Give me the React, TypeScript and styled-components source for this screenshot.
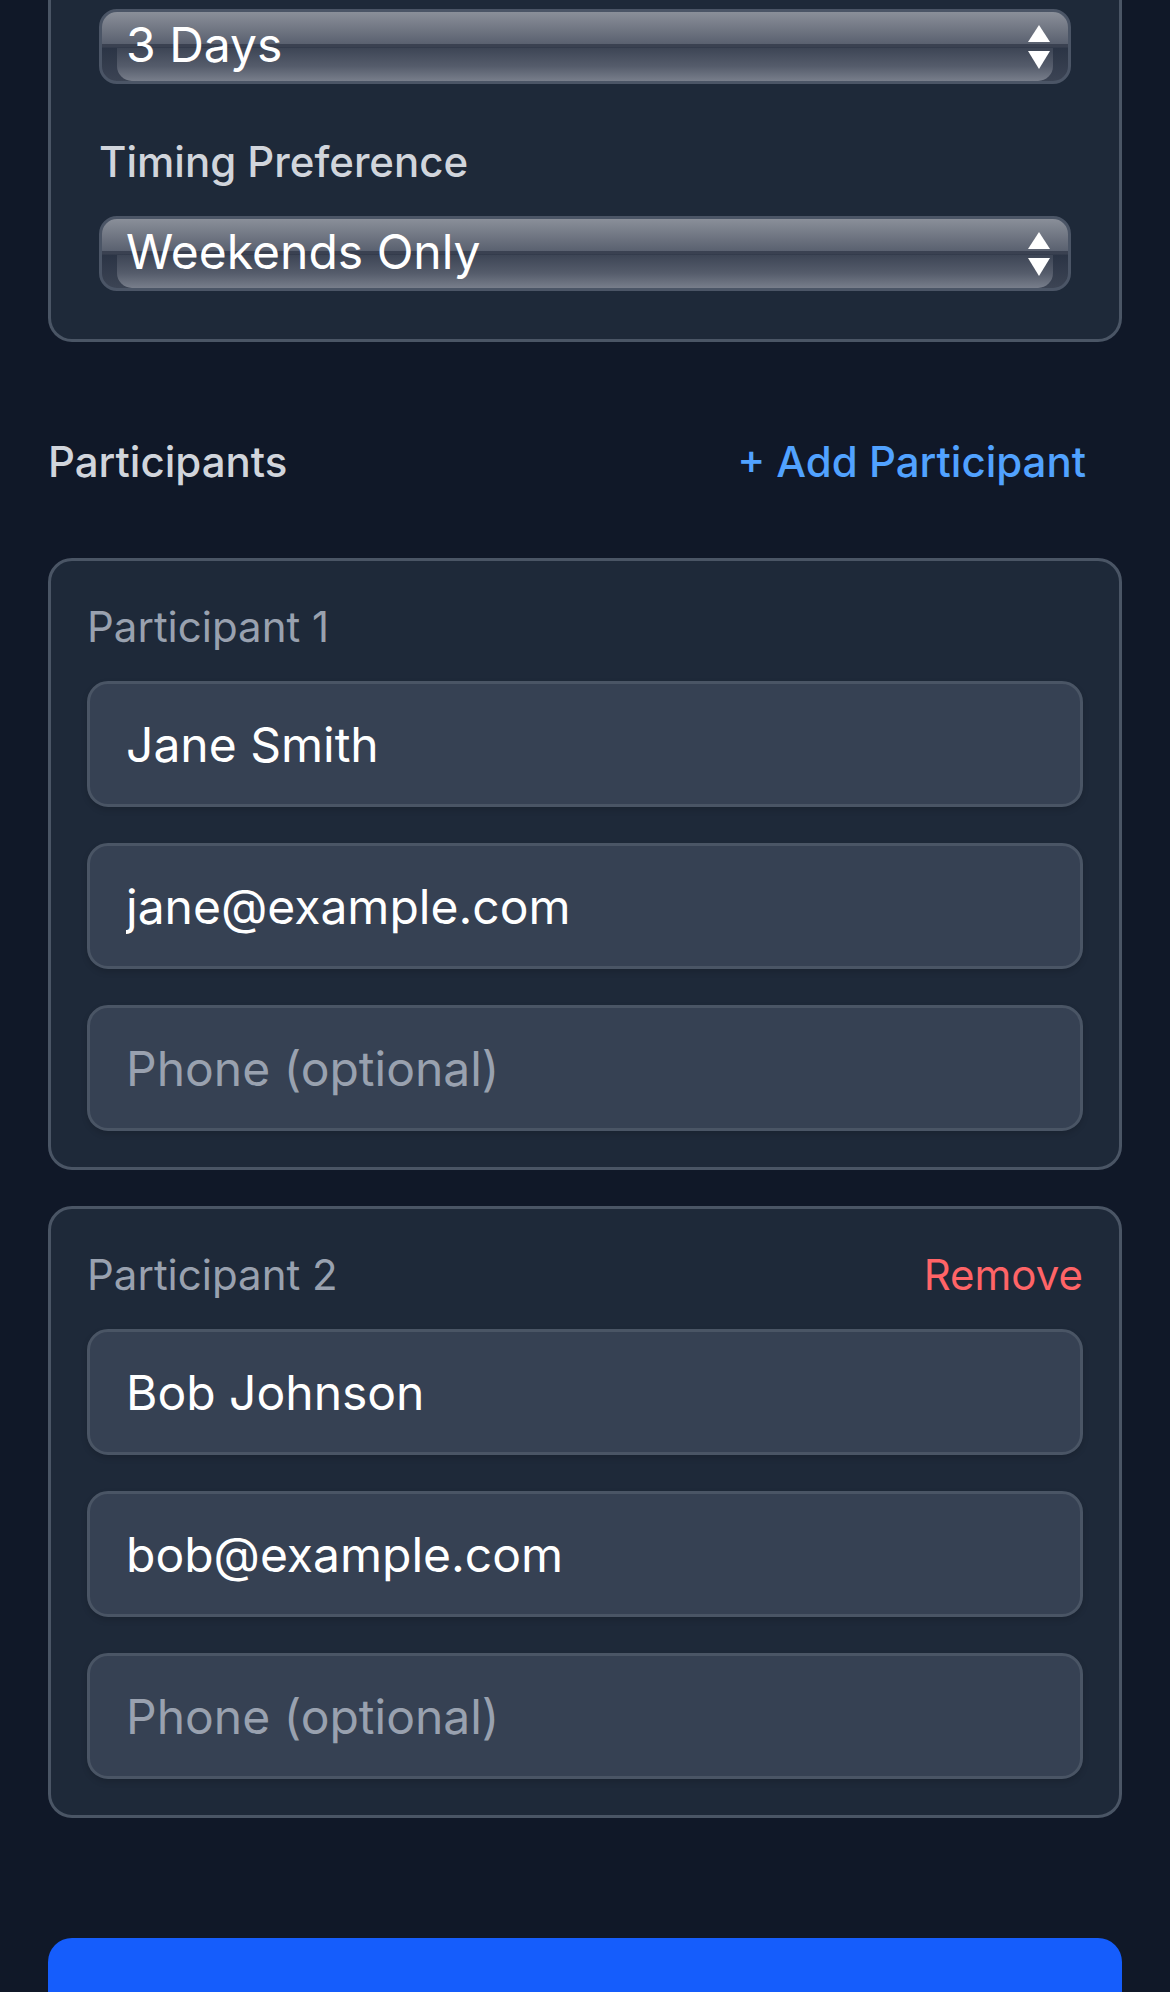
import React from "react";
import styled, { createGlobalStyle } from "styled-components";

const GlobalStyle = createGlobalStyle`
  html, body {
    margin: 0;
    padding: 0;
    background: #101828;
  }
  body {
    font-family: Inter, "Noto Sans", "Liberation Sans", sans-serif;
    -webkit-font-smoothing: antialiased;
  }
  *, *::before, *::after {
    box-sizing: border-box;
  }
`;

const Page = styled.main`
  display: flex;
  flex-direction: column;
  padding: 0 48px;
`;

const PreferencesCard = styled.section`
  display: flex;
  flex-direction: column;
  gap: 48px;
  background: #1e2939;
  border: 3px solid #4a5565;
  border-top: none;
  border-radius: 0 0 24px 24px;
  padding: 9px 48px 48px;
`;

const Field = styled.div`
  display: flex;
  flex-direction: column;
`;

const FieldLabel = styled.label`
  font-size: 42px;
  line-height: 60px;
  font-weight: 500;
  color: #d1d5dc;
  margin-bottom: 24px;
`;

const SelectShell = styled.div`
  position: relative;
  height: 75px;
  border: 3px solid #4b5566;
  border-radius: 18px;
  overflow: hidden;
  background: linear-gradient(
    to bottom,
    #8a8f99 0%,
    #6b717e 30%,
    #5a6170 46%,
    #3a4151 47%,
    #3a4151 51%,
    #2b3445 52%,
    #3c4454 100%
  );

  &::before {
    content: "";
    position: absolute;
    left: 15px;
    right: 15px;
    top: 52%;
    bottom: 0;
    border-radius: 0 0 15px 15px;
    background: linear-gradient(to bottom, #3d4555 0%, #555c6b 55%, #787e8b 100%);
  }
`;

const NativeSelect = styled.select`
  position: relative;
  z-index: 1;
  appearance: none;
  -webkit-appearance: none;
  width: 100%;
  height: 100%;
  margin: 0;
  border: none;
  outline: none;
  background: transparent;
  color: #ffffff;
  font-family: Inter, "Noto Sans", sans-serif;
  font-size: 48px;
  line-height: 58px;
  font-weight: 400;
  padding: 0 80px 3px 24px;
  cursor: pointer;
`;

const SelectArrows = styled.svg`
  position: absolute;
  z-index: 2;
  right: 18px;
  top: 13px;
  width: 22px;
  height: 44px;
  pointer-events: none;
`;

const HeaderRow = styled.div`
  display: flex;
  align-items: center;
  justify-content: space-between;
  margin: 90px 0 66px;
`;

const SectionTitle = styled.h3`
  margin: 0;
  font-size: 42px;
  line-height: 60px;
  font-weight: 500;
  color: #d1d5dc;
`;

const AddButton = styled.button`
  background: none;
  border: none;
  padding: 0 36px;
  font-family: inherit;
  font-size: 42px;
  line-height: 60px;
  font-weight: 500;
  color: #51a2ff;
  cursor: pointer;
`;

const ParticipantList = styled.div`
  display: flex;
  flex-direction: column;
  gap: 36px;
`;

const ParticipantCard = styled.div`
  background: #1e2939;
  border: 3px solid #4a5565;
  border-radius: 24px;
  padding: 36px;
`;

const CardHeader = styled.div`
  display: flex;
  align-items: center;
  justify-content: space-between;
  height: 60px;
  margin-bottom: 24px;
`;

const ParticipantLabel = styled.span`
  font-size: 42px;
  line-height: 60px;
  font-weight: 400;
  color: #99a1af;
`;

const RemoveButton = styled.button`
  background: none;
  border: none;
  padding: 0;
  font-family: inherit;
  font-size: 42px;
  line-height: 60px;
  font-weight: 400;
  color: #ff6467;
  cursor: pointer;
`;

const InputStack = styled.div`
  display: flex;
  flex-direction: column;
  gap: 36px;
`;

const TextInput = styled.input`
  width: 100%;
  height: 126px;
  margin: 0;
  padding: 0 36px;
  background: #364153;
  border: 3px solid #4a5565;
  border-radius: 21px;
  box-shadow: 0 3px 6px rgba(0, 0, 0, 0.14);
  color: #ffffff;
  font-family: Inter, "Noto Sans", sans-serif;
  font-size: 48px;
  font-weight: 400;
  outline: none;

  &::placeholder {
    color: #99a1af;
    opacity: 1;
  }
`;

const SubmitButton = styled.button`
  width: 100%;
  height: 156px;
  margin-top: 120px;
  border: none;
  border-radius: 24px;
  background: #155dfc;
  cursor: pointer;
`;

const Arrows = () => (
  <SelectArrows viewBox="0 0 22 44" aria-hidden="true">
    <polygon points="11,0 22,17 0,17" fill="#ffffff" />
    <polygon points="0,26 22,26 11,44" fill="#ffffff" />
  </SelectArrows>
);

type Participant = {
  id: number;
  name: string;
  email: string;
  phone: string;
};

const participants: Participant[] = [
  { id: 1, name: "Jane Smith", email: "jane@example.com", phone: "" },
  { id: 2, name: "Bob Johnson", email: "bob@example.com", phone: "" },
];

export default function App() {
  return (
    <>
      <GlobalStyle />
      <Page>
        <PreferencesCard>
          <Field>
            <SelectShell>
              <NativeSelect defaultValue="3" aria-label="Duration">
                <option value="1">1 Day</option>
                <option value="2">2 Days</option>
                <option value="3">3 Days</option>
                <option value="5">5 Days</option>
                <option value="7">1 Week</option>
              </NativeSelect>
              <Arrows />
            </SelectShell>
          </Field>
          <Field>
            <FieldLabel htmlFor="timing">Timing Preference</FieldLabel>
            <SelectShell>
              <NativeSelect id="timing" defaultValue="weekends">
                <option value="weekends">Weekends Only</option>
                <option value="weekdays">Weekdays Only</option>
                <option value="any">Any Time</option>
              </NativeSelect>
              <Arrows />
            </SelectShell>
          </Field>
        </PreferencesCard>

        <HeaderRow>
          <SectionTitle>Participants</SectionTitle>
          <AddButton type="button">+ Add Participant</AddButton>
        </HeaderRow>

        <ParticipantList>
          {participants.map((p, i) => (
            <ParticipantCard key={p.id}>
              <CardHeader>
                <ParticipantLabel>Participant {i + 1}</ParticipantLabel>
                {i > 0 && <RemoveButton type="button">Remove</RemoveButton>}
              </CardHeader>
              <InputStack>
                <TextInput type="text" defaultValue={p.name} placeholder="Name" />
                <TextInput type="email" defaultValue={p.email} placeholder="Email" />
                <TextInput type="tel" defaultValue={p.phone} placeholder="Phone (optional)" />
              </InputStack>
            </ParticipantCard>
          ))}
        </ParticipantList>

        <SubmitButton type="submit" aria-label="Create Plan" />
      </Page>
    </>
  );
}
